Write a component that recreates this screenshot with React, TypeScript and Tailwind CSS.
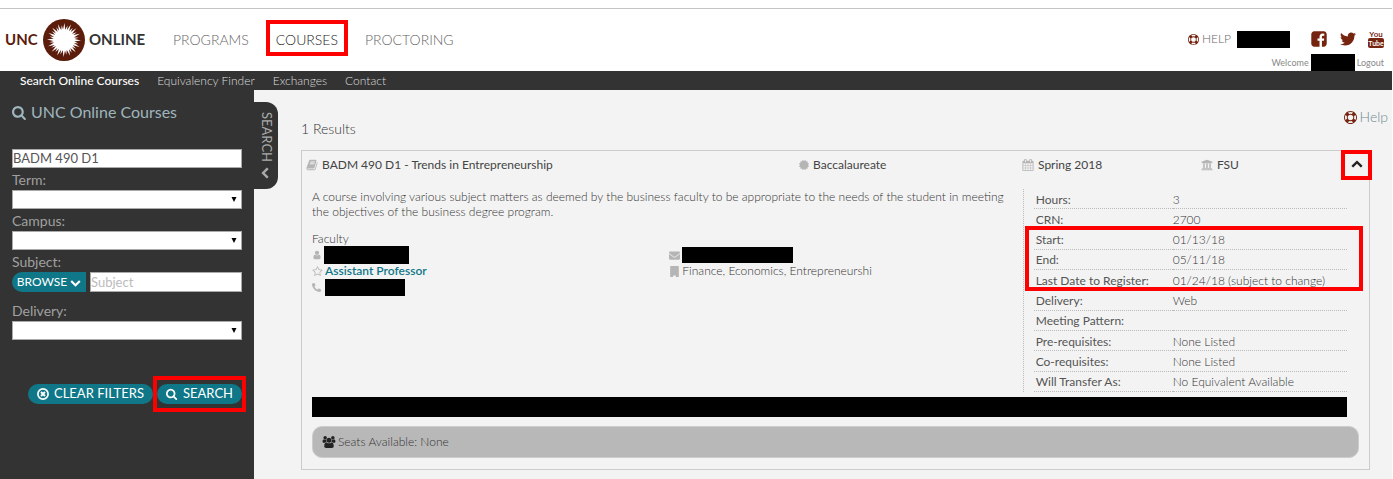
import { useState } from 'react';
import type { ReactNode } from 'react';
import { FaCertificate, FaEnvelope, FaPhoneAlt, FaTwitter, FaUniversity } from 'react-icons/fa';

const SEARCH =
  'M1152 832q0-185-131.5-316.5t-316.5-131.5-316.5 131.5-131.5 316.5 131.5 316.5 316.5 131.5 316.5-131.5 131.5-316.5zm512 832q0 52-38 90t-90 38q-54 0-90-38l-343-342q-179 124-399 124-143 0-273.5-55.5t-225-150-150-225-55.5-273.5 55.5-273.5 150-225 225-150 273.5-55.5 273.5 55.5 225 150 150 225 55.5 273.5q0 220-124 399l343 343q37 37 37 90z';
const CHEVRON =
  'M1683 808l-742 741q-19 19-45 19t-45-19l-742-741q-19-19-19-45.5t19-45.5l166-165q19-19 45-19t45 19l531 531 531-531q19-19 45-19t45 19l166 165q19 19 19 45.5t-19 45.5z';
const LIFE_RING =
  'M896 0q182 0 348 71t286 191 191 286 71 348-71 348-191 286-286 191-348 71-348-71-286-191-191-286-71-348 71-348 191-286 286-191 348-71zm0 128q-190 0-361 90l194 194q82-28 167-28t167 28l194-194q-171-90-361-90zm-678 1129l194-194q-28-82-28-167t28-167l-194-194q-90 171-90 361t90 361zm678 407q190 0 361-90l-194-194q-82 28-167 28t-167-28l-194 194q171 90 361 90zm0-384q159 0 271.5-112.5t112.5-271.5-112.5-271.5-271.5-112.5-271.5 112.5-112.5 271.5 112.5 271.5 271.5 112.5zm484-217l194 194q90-171 90-361t-90-361l-194 194q28 82 28 167t-28 167z';
const BOOK =
  'M1703 478q40 57 18 129l-275 906q-19 64-76.5 107.5t-122.5 43.5h-923q-77 0-148.5-53.5t-99.5-131.5q-24-67-2-127 0-4 3-27t4-37q1-8-3-21.5t-3-19.5q2-11 8-21t16.5-23.5 16.5-23.5q23-38 45-91.5t30-91.5q3-10 .5-30t-.5-28q3-11 17-28t17-23q21-36 42-92t25-90q1-9-2.5-32t.5-28q4-13 22-30.5t22-22.5q19-26 42.5-84.5t27.5-96.5q1-8-3-25.5t-2-26.5q2-8 9-18t18-23 17-21q8-12 16.5-30.5t15-35 16-36 19.5-32 26.5-23.5 36-11.5 47.5 5.5l-1 3q38-9 51-9h761q74 0 114 56t18 130l-274 906q-36 119-71.5 153.5t-128.5 34.5h-869q-27 0-38 15-11 16-1 43 24 70 144 70h923q29 0 56-15.5t35-41.5l300-987q7-22 5-57 38 15 59 43zm-1064 2q-4 13 2 22.5t20 9.5h608q13 0 25.5-9.5t16.5-22.5l21-64q4-13-2-22.5t-20-9.5h-608q-13 0-25.5 9.5t-16.5 22.5zm-83 256q-4 13 2 22.5t20 9.5h608q13 0 25.5-9.5t16.5-22.5l21-64q4-13-2-22.5t-20-9.5h-608q-13 0-25.5 9.5t-16.5 22.5z';
const CALENDAR =
  'M192 1664h288v-288h-288v288zm352 0h320v-288h-320v288zm-352-352h288v-320h-288v320zm352 0h320v-320h-320v320zm-352-384h288v-288h-288v288zm736 736h320v-288h-320v288zm-384-736h320v-288h-320v288zm768 736h288v-288h-288v288zm-384-352h320v-320h-320v320zm-352-864v-288q0-13-9.5-22.5t-22.5-9.5h-64q-13 0-22.5 9.5t-9.5 22.5v288q0 13 9.5 22.5t22.5 9.5h64q13 0 22.5-9.5t9.5-22.5zm736 864h288v-320h-288v320zm-384-384h320v-288h-320v288zm384 0h288v-288h-288v288zm32-480v-288q0-13-9.5-22.5t-22.5-9.5h-64q-13 0-22.5 9.5t-9.5 22.5v288q0 13 9.5 22.5t22.5 9.5h64q13 0 22.5-9.5t9.5-22.5zm384-64v1280q0 52-38 90t-90 38h-1408q-52 0-90-38t-38-90v-1280q0-52 38-90t90-38h128v-96q0-66 47-113t113-47h64q66 0 113 47t47 113v96h384v-96q0-66 47-113t113-47h64q66 0 113 47t47 113v96h128q52 0 90 38t38 90z';
const STAR =
  'M1201 1004l306-297-422-62-189-382-189 382-422 62 306 297-73 421 378-199 377 199zm527-357q0 22-26 48l-363 354 86 500q1 7 1 20 0 50-41 50-19 0-40-12l-449-236-449 236q-22 12-40 12-21 0-31.5-14.5t-10.5-35.5q0-6 2-20l86-500-364-354q-25-27-25-48 0-37 56-46l502-73 225-455q19-41 49-41t49 41l225 455 502 73q56 9 56 46z';
const FACEBOOK =
  'M1376 128q119 0 203.5 84.5t84.5 203.5v960q0 119-84.5 203.5t-203.5 84.5h-188v-595h199l30-232h-229v-148q0-56 23.5-84t91.5-28l122-1v-207q-63-9-178-9-136 0-217.5 80t-81.5 226v171h-200v232h200v595h-532q-119 0-203.5-84.5t-84.5-203.5v-960q0-119 84.5-203.5t203.5-84.5h960z';
const USER =
  'M1536 1399q0 109-62.5 187t-150.5 78h-854q-88 0-150.5-78t-62.5-187q0-85 8.5-160.5t31.5-152 58.5-131 94-89 134.5-34.5q131 128 313 128t313-128q76 0 134.5 34.5t94 89 58.5 131 31.5 152 8.5 160.5zm-256-887q0 159-112.5 271.5t-271.5 112.5-271.5-112.5-112.5-271.5 112.5-271.5 271.5-112.5 271.5 112.5 112.5 271.5z';
const USERS =
  'M529 896q-162 5-265 128h-134q-82 0-138-40.5t-56-118.5q0-353 124-353 6 0 43.5 21t97.5 42.5 119 21.5q67 0 133-23-5 37-5 66 0 139 81 256zm1071 637q0 120-73 189.5t-194 69.5h-874q-121 0-194-69.5t-73-189.5q0-53 3.5-103.5t14-109 26.5-108.5 43-97.5 62-81 85.5-53.5 111.5-20q10 0 43 21.5t73 48 107 48 135 21.5 135-21.5 107-48 73-48 43-21.5q61 0 111.5 20t85.5 53.5 62 81 43 97.5 26.5 108.5 14 109 3.5 103.5zm-1024-1277q0 106-75 181t-181 75-181-75-75-181 75-181 181-75 181 75 75 181zm704 384q0 159-112.5 271.5t-271.5 112.5-271.5-112.5-112.5-271.5 112.5-271.5 271.5-112.5 271.5 112.5 112.5 271.5zm576 225q0 78-56 118.5t-138 40.5h-134q-103-123-265-128 81-117 81-256 0-29-5-66 66 23 133 23 59 0 119-21.5t97.5-42.5 43.5-21q124 0 124 353zm-128-609q0 106-75 181t-181 75-181-75-75-181 75-181 181-75 181 75 75 181z';
const BUILDING = 'M256 0h1280q64 0 64 64v1664q0 64-64 64h-416v-224q0-32-32-32h-384q-32 0-32 32v224h-416q-64 0-64-64v-1664q0-64 64-64z';

const DETAILS = [
  ['Hours:', '3'],
  ['CRN:', '2700'],
  ['Start:', '01/13/18'],
  ['End:', '05/11/18'],
  ['Last Date to Register:', '01/24/18 (subject to change)'],
  ['Delivery:', 'Web'],
  ['Meeting Pattern:', ''],
  ['Pre-requisites:', 'None Listed'],
  ['Co-requisites:', 'None Listed'],
  ['Will Transfer As:', 'No Equivalent Available'],
];

const RAYS = Array.from({ length: 32 }, (_, i) => i * 11.25);

function Icon({ d, className }: { d: string; className: string }) {
  return (
    <svg viewBox="0 0 1792 1792" fill="currentColor" aria-hidden="true" className={`shrink-0 overflow-visible ${className}`}>
      <path d={d} />
    </svg>
  );
}

function Sunburst() {
  return (
    <svg viewBox="0 0 42 42" className="size-[42px]" aria-hidden="true">
      <circle cx="21" cy="21" r="21" fill="#5b1c0c" />
      <circle cx="21" cy="21" r="10.5" fill="#fff" />
      {RAYS.map((angle, i) => (
        <path
          key={angle}
          d={i % 2 ? 'M20 11.5L21.6 6.2L22.2 11.5Z' : 'M19.8 11.5L21.4 4L22.4 11.5Z'}
          fill="#fff"
          transform={`rotate(${angle} 21 21)`}
        />
      ))}
    </svg>
  );
}

function YouTubeIcon() {
  return (
    <svg viewBox="0 0 16 20" className="h-5 w-4" role="img" aria-label="YouTube">
      <text x="8" y="8" textAnchor="middle" fontSize="8" fontWeight="500" fill="#752410" className="font-['Roboto',sans-serif]">
        You
      </text>
      <rect x="0" y="9" width="16" height="10" rx="2" fill="#752410" />
      <text x="8" y="17" textAnchor="middle" fontSize="7" fontWeight="500" fill="#fff" className="font-['Roboto',sans-serif]">
        Tube
      </text>
    </svg>
  );
}

function ClearIcon() {
  return (
    <svg viewBox="0 0 12 12" fill="none" stroke="currentColor" className="size-3" aria-hidden="true">
      <circle cx="6" cy="6" r="5.1" strokeWidth="1.7" />
      <path d="M4 4L8 8M8 4L4 8" strokeWidth="1.9" />
    </svg>
  );
}

// red marker drawn around the nearest relative parent
function Highlight({ className }: { className: string }) {
  return <span className={`pointer-events-none absolute border-4 border-[#ff0000] ${className}`} />;
}

function SelectField({ id, label }: { id: string; label: string }) {
  return (
    <div>
      <label htmlFor={id} className="block text-sm leading-5">{label}</label>
      <div className="relative">
        <select id={id} className="block h-[19px] w-full appearance-none border border-[#aaa] bg-white text-black">
          <option value=""></option>
        </select>
        <svg viewBox="0 0 6 5" className="pointer-events-none absolute top-[7px] right-[5px] h-[5px] w-1.5" aria-hidden="true">
          <path d="M0.5 0H5.5L3 5Z" fill="#000" />
        </svg>
      </div>
    </div>
  );
}

function Meta({ icon, children }: { icon: ReactNode; children: ReactNode }) {
  return (
    <div className="flex items-center gap-1 text-[#b5b5b5]">
      {icon}
      <span className="text-[#444]">{children}</span>
    </div>
  );
}

export default function App() {
  const [query, setQuery] = useState('BADM 490 D1');
  const [subject, setSubject] = useState('');
  const [open, setOpen] = useState(true);

  return (
    <div className="flex min-h-screen flex-col bg-white pt-2 pr-px font-['Lato','Open_Sans',sans-serif] font-light text-[#333]">
      <header className="flex h-[63px] items-start justify-between border-t border-[#c4c4c4] pr-2">
        <div className="flex h-[61px] items-center">
          <a href="#home" className="flex items-center gap-1 pl-[5px] text-[15px] font-bold">
            <span className="w-[34px] text-[#5b1c0c]">UNC</span>
            <Sunburst />
            <span className="w-[60px] text-[#333]">ONLINE</span>
          </a>
          <nav className="flex gap-[27px] pl-6 text-sm text-[#666]">
            <a href="#programs">PROGRAMS</a>
            <a href="#courses" className="relative text-[#222]">
              COURSES
              <Highlight className="-inset-x-2.5 -top-2.5 -bottom-1.5" />
            </a>
            <a href="#proctoring">PROCTORING</a>
          </nav>
        </div>
        <div className="flex flex-col items-end gap-[5px] pt-5">
          <div className="flex h-5 items-center text-[#752410]">
            <a href="#help" className="flex items-center gap-[3px] text-xs">
              <Icon d={LIFE_RING} className="size-[11px]" />
              <span className="text-[#666]">HELP</span>
            </a>
            <span className="ml-1.5 h-[17px] w-[53px] bg-black" />
            <a href="#facebook" aria-label="Facebook" className="ml-5"><Icon d={FACEBOOK} className="size-[18px]" /></a>
            <a href="#twitter" aria-label="Twitter" className="ml-3"><FaTwitter className="size-4" /></a>
            <a href="#youtube" className="ml-3"><YouTubeIcon /></a>
          </div>
          <div className="flex h-[18px] items-center gap-0.5 text-[9px] font-normal text-[#888]">
            Welcome
            <span className="h-[18px] w-11 bg-black" />
            <a href="#logout">Logout</a>
          </div>
        </div>
      </header>

      <nav className="flex h-[19px] shrink-0 items-center gap-[18px] bg-[#333] pl-5 text-xs text-[#ddd]">
        <a href="#search" className="font-medium text-white">Search Online Courses</a>
        <a href="#finder">Equivalency Finder</a>
        <a href="#exchanges">Exchanges</a>
        <a href="#contact">Contact</a>
      </nav>

      <div className="flex grow">
        <aside className="relative w-[254px] shrink-0 bg-[#333] px-3 pt-2.5 text-[#a0a0a0]">
          <h1 className="flex items-center gap-1 text-base leading-6 font-normal text-[#9fb5bd]">
            <Icon d={SEARCH} className="size-[15px]" />
            UNC Online Courses
          </h1>
          <form className="mt-[25px] w-[230px]" onSubmit={(e) => e.preventDefault()}>
            <input
              aria-label="Keyword"
              value={query}
              onChange={(e) => setQuery(e.target.value)}
              className="mb-0.5 block h-[19px] w-full border border-[#aaa] bg-white text-[13px] font-normal text-[#555]"
            />
            <div className="flex flex-col gap-0.5 font-normal">
              <SelectField id="term" label="Term:" />
              <SelectField id="campus" label="Campus:" />
              <div className="mb-[7px]">
                <label htmlFor="subject" className="block text-sm leading-5">Subject:</label>
                <div className="flex gap-1">
                  <button type="button" className="flex h-5 w-[74px] shrink-0 items-center justify-center gap-[3px] rounded-l-full bg-[#0f7788] text-xs text-white">
                    BROWSE
                    <Icon d={CHEVRON} className="size-[11px]" />
                  </button>
                  <input
                    id="subject"
                    placeholder="Subject"
                    value={subject}
                    onChange={(e) => setSubject(e.target.value)}
                    className="h-5 min-w-0 grow border border-[#aaa] bg-white text-[13px] text-[#555] placeholder:text-[#bbb]"
                  />
                </div>
              </div>
              <SelectField id="delivery" label="Delivery:" />
            </div>
            <div className="mt-11 flex justify-end gap-1 text-[13px] font-normal text-white">
              <button type="reset" className="flex h-5 items-center gap-[5px] rounded-full bg-[#0f7788] px-[9px]">
                <ClearIcon />
                CLEAR FILTERS
              </button>
              <button type="submit" className="relative flex h-5 items-center gap-[5px] rounded-full bg-[#0f7788] px-[9px]">
                <Icon d={SEARCH} className="size-3" />
                SEARCH
                <Highlight className="-inset-x-1 -inset-y-2" />
              </button>
            </div>
          </form>
          <button
            type="button"
            className="absolute top-3 left-full flex h-[87px] w-6 items-center justify-center gap-1 rounded-r-xl bg-[#333] text-[13px] font-normal text-[#aaa] [writing-mode:vertical-rl]"
          >
            SEARCH
            <Icon d={CHEVRON} className="size-3 rotate-90" />
          </button>
        </aside>

        <main className="min-w-0 grow bg-[#f3f3f3] pr-[22px] pb-2.5 pl-[47px]">
          <div className="-mr-[18px] flex justify-end pt-[17px]">
            <a href="#page-help" className="flex items-center gap-[3px] text-sm text-[#6f8a91]">
              <Icon d={LIFE_RING} className="size-[13px] text-[#752410]" />
              Help
            </a>
          </div>
          <p className="mb-[11px] -mt-2 text-sm leading-5">1 Results</p>

          <section className="border border-[#ccc] pb-[11px]">
            <div className="grid h-7 grid-cols-[493fr_223fr_179fr_140fr_28px] items-center pl-1 text-xs font-normal">
              <Meta icon={<Icon d={BOOK} className="size-3" />}>BADM 490 D1 - Trends in Entrepreneurship</Meta>
              <Meta icon={<FaCertificate className="size-2.5" />}>Baccalaureate</Meta>
              <Meta icon={<Icon d={CALENDAR} className="size-3" />}>Spring 2018</Meta>
              <Meta icon={<FaUniversity className="size-3" />}>FSU</Meta>
              <button
                type="button"
                aria-label="Toggle details"
                onClick={() => setOpen(!open)}
                className="relative flex h-7 items-center justify-center pl-1 text-[#222]"
              >
                <Icon d={CHEVRON} className="size-3 rotate-180" />
                <Highlight className="-inset-y-px -right-[3px] left-0" />
              </button>
            </div>

            {open && (
              <div className="px-2.5">
                <div className="mt-2.5 grid grid-cols-[710fr_324fr] pr-3">
                  <div className="text-xs">
                    <p className="pr-3 leading-[15px]">
                      A course involving various subject matters as deemed by the business faculty to be appropriate to the needs of the student in meeting the objectives of the business degree program.
                    </p>
                    <h2 className="mt-3 leading-4">Faculty</h2>
                    <div className="grid grid-cols-2 gap-x-1 leading-4 text-[#b5b5b5]">
                      <ul>
                        <li className="flex h-4 items-center gap-0.5">
                          <Icon d={USER} className="size-[10px]" />
                          <span className="h-[18px] w-[85px] bg-black" />
                        </li>
                        <li className="flex h-4 items-center gap-0.5">
                          <Icon d={STAR} className="size-[11px]" />
                          <a href="#professor" className="font-semibold text-[#0f7788]">Assistant Professor</a>
                        </li>
                        <li className="flex h-4 items-center gap-1">
                          <FaPhoneAlt className="size-[9px]" />
                          <span className="h-[17px] w-20 bg-black" />
                        </li>
                      </ul>
                      <ul>
                        <li className="flex h-4 items-center gap-0.5">
                          <FaEnvelope className="size-[11px]" />
                          <span className="h-4 w-[111px] bg-black" />
                        </li>
                        <li className="flex h-4 items-center gap-0.5">
                          <Icon d={BUILDING} className="size-[11px]" />
                          <span className="text-[#333]">Finance, Economics, Entrepreneurshi</span>
                        </li>
                      </ul>
                    </div>
                  </div>
                  <div className="relative border-l border-dotted border-[#bbb] pl-2.5">
                    <table className="h-[203px] w-full text-xs leading-[14px]">
                      <tbody>
                        {DETAILS.map(([name, value]) => (
                          <tr key={name} className="border-b border-dotted border-[#bbb]">
                            <th scope="row" className="w-[139px] pt-0.5 pl-0.5 text-left font-normal text-[#555]">{name}</th>
                            <td className="pt-0.5">{value}</td>
                          </tr>
                        ))}
                      </tbody>
                    </table>
                    <Highlight className="top-[37px] -right-4 left-px h-[65px]" />
                  </div>
                </div>
                <div className="mt-[5px] mr-3 h-5 bg-black" />
                <div className="mt-[9px] flex h-8 items-center gap-[3px] rounded-[10px] border border-[#ccc] bg-[#b8b8b8] px-2.5 text-xs">
                  <Icon d={USERS} className="size-3 text-[#222]" />
                  Seats Available: None
                </div>
              </div>
            )}
          </section>
        </main>
      </div>
    </div>
  );
}
